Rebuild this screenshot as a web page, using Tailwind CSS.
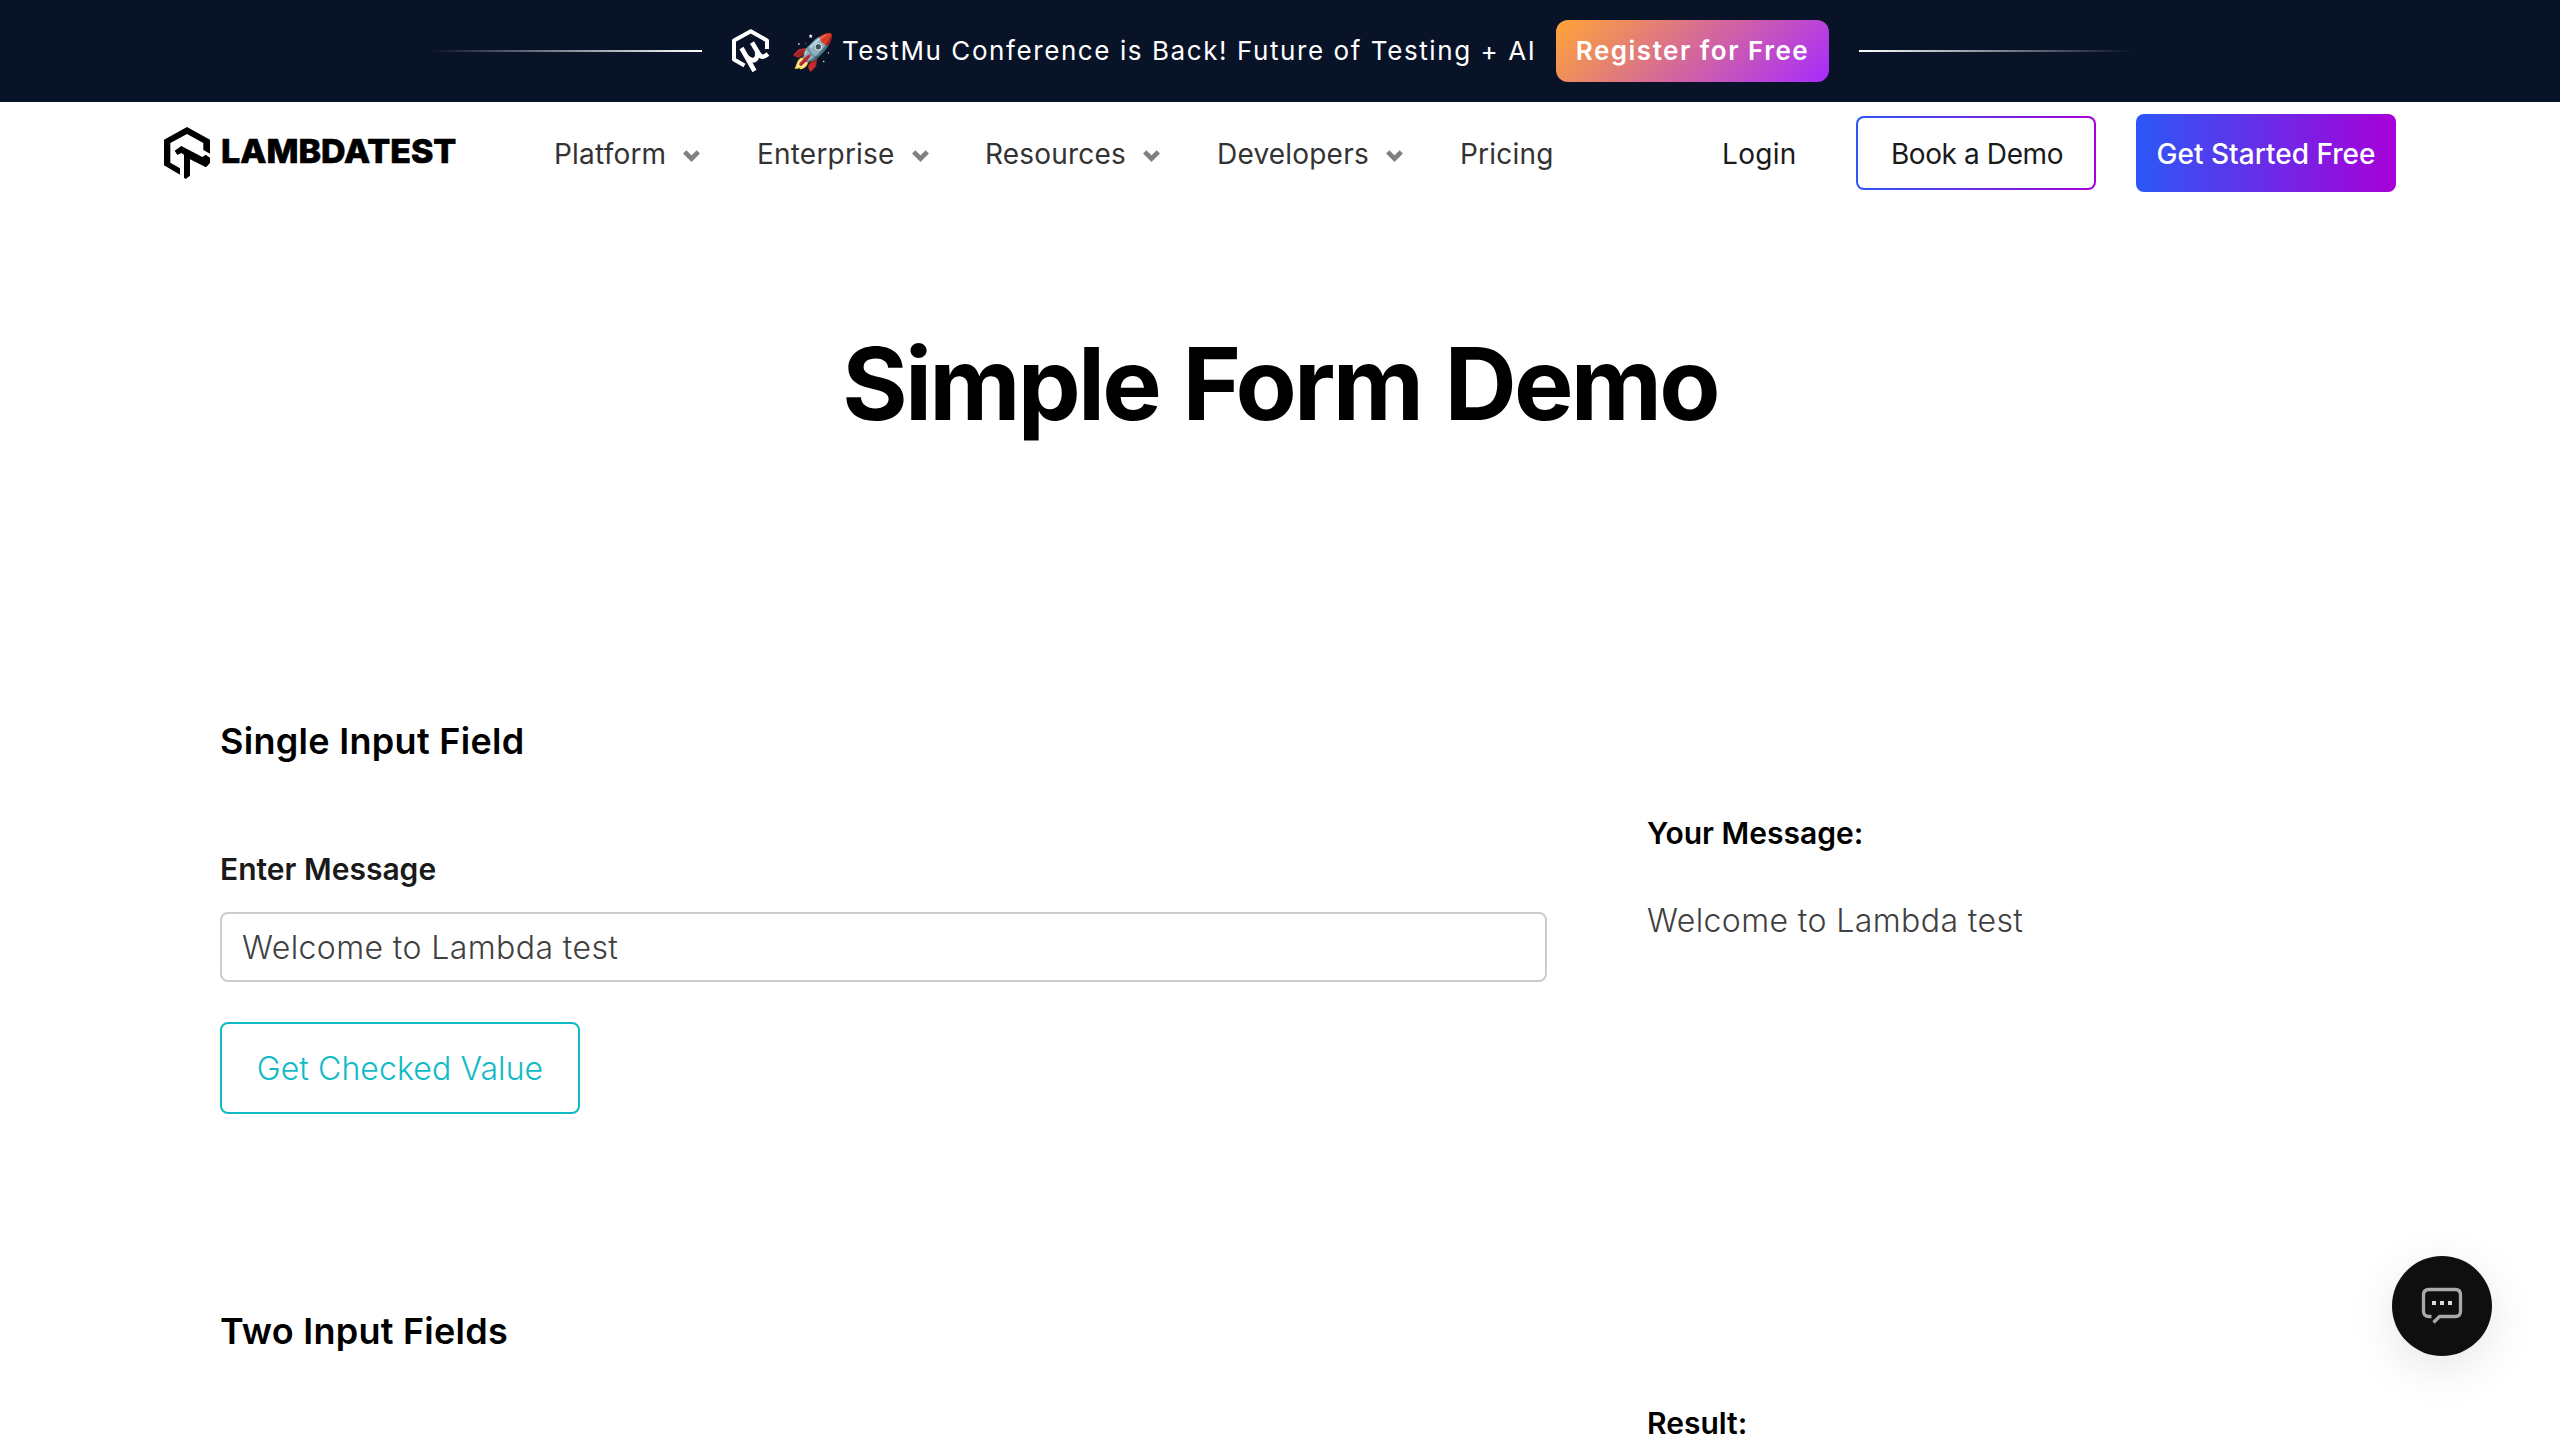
<!DOCTYPE html>
<html lang="en">
<head>
<meta charset="utf-8">
<title>Simple Form Demo</title>
<script src="https://cdn.jsdelivr.net/npm/@tailwindcss/browser@4"></script>
</head>
<body class="relative h-[1440px] w-[2560px] overflow-hidden bg-white font-['Inter',sans-serif] text-black">

<!-- Announcement banner -->
<div class="flex h-[102px] items-center bg-[#081327] pl-[428px] text-[26px] leading-[40px] whitespace-nowrap text-white">
  <div class="h-[2px] w-[274px] bg-linear-to-r/srgb from-white/0 to-white"></div>
  <svg class="ml-[28px] h-[48px] w-[42px]" viewBox="730 27 42 48" fill="none" stroke="#fff" stroke-width="4" stroke-linejoin="round">
    <path d="M744.500 65.500 734 59.500V40.500L750.800 31.200 767 40.500V49"/>
    <path d="M741.500 48 754.500 71M752 42.500 758.500 53.500C761.500 58.500 764 57 768 54M745 54.500C749 61 754.500 61.500 756.500 58C757.500 56 757.500 54 757 51" stroke-width="4.600"/>
  </svg>
  <span class="ml-[19px] text-[35px]">🚀</span>
  <span class="ml-[7px] w-[694px] tracking-[1.58px]">TestMu Conference is Back! Future of Testing + AI</span>
  <a class="ml-[20px] flex h-[62px] w-[273px] items-center justify-center rounded-[12px] bg-linear-[135deg,#ffa536,#a92bff] font-semibold tracking-[1.5px]">Register for Free</a>
  <div class="ml-[30px] h-[2px] w-[274px] bg-linear-to-l/srgb from-white/0 to-white"></div>
</div>

<!-- Main navigation -->
<header class="flex h-[102px] items-center pl-[163px] text-[28px] whitespace-nowrap">
  <svg class="h-[52px] w-[300px]" viewBox="69 80 900 156">
    <path d="M141 80 210 118V160L190 149V128L141 101 91 128V187L120 204V223L72 195V118Z"/>
    <path d="M104 151 124 137 187 170 197 163 210 172V188L198 201 150 177V226L137 236 132 232V163L124 158 112 164Z"/>
    <text x="243" y="189" font-size="100" font-weight="800" textLength="706" lengthAdjust="spacingAndGlyphs" stroke="#000" stroke-width="2">LAMBDATEST</text>
  </svg>
  <nav class="ml-[91px] flex items-center pt-[2px] tracking-[0.2px] text-[#333]">
    <a class="flex w-[203px] items-center">Platform<svg class="mt-[4px] ml-[17px] h-[12px] w-[17px]" viewBox="0 0 17 12" fill="none" stroke="#808080" stroke-width="4.600"><path d="M1.700 1.900 8.500 8.700 15.300 1.900"/></svg></a>
    <a class="flex w-[228px] items-center">Enterprise<svg class="mt-[4px] ml-[17px] h-[12px] w-[17px]" viewBox="0 0 17 12" fill="none" stroke="#808080" stroke-width="4.600"><path d="M1.700 1.900 8.500 8.700 15.300 1.900"/></svg></a>
    <a class="flex w-[232px] items-center">Resources<svg class="mt-[4px] ml-[17px] h-[12px] w-[17px]" viewBox="0 0 17 12" fill="none" stroke="#808080" stroke-width="4.600"><path d="M1.700 1.900 8.500 8.700 15.300 1.900"/></svg></a>
    <a class="flex w-[243px] items-center">Developers<svg class="mt-[4px] ml-[17px] h-[12px] w-[17px]" viewBox="0 0 17 12" fill="none" stroke="#808080" stroke-width="4.600"><path d="M1.700 1.900 8.500 8.700 15.300 1.900"/></svg></a>
    <a class="w-[262px]">Pricing</a>
  </nav>
  <a class="w-[134px] pt-[2px] tracking-[0.3px] text-[#1a1a1a]">Login</a>
  <a class="flex h-[74px] w-[240px] rounded-[8px] bg-linear-to-r/srgb from-[#2b58f7] to-[#a800d8] p-[2px] text-[#1a1a1a]"><span class="flex flex-1 items-center justify-center rounded-[6px] bg-white pt-[2px] pl-[2px] tracking-[-0.4px]">Book a Demo</span></a>
  <a class="ml-[40px] flex h-[78px] w-[260px] items-center justify-center rounded-[8px] bg-linear-to-r/srgb from-[#2b58f7] to-[#a800d8] pt-[1px] font-medium text-white">Get Started Free</a>
</header>

<main>
  <h1 class="pt-[120px] text-center text-[100px] leading-[120px] font-bold tracking-[-2.8px] [word-spacing:2.5px]">Simple Form Demo</h1>

  <section class="flex h-[590px] pt-[277px] pl-[220px]">
    <div class="w-[1327px]">
      <h2 class="text-[36px] leading-[40px] font-semibold tracking-[0.3px]">Single Input Field</h2>
      <label class="mt-[88px] block text-[30px] leading-[40px] font-semibold text-[#1a1a1a]">Enter Message</label>
      <div class="mt-[23px] flex h-[70px] items-center rounded-[8px] border-2 border-[#ccc] px-[20px] pt-[2px] text-[32px] font-light tracking-[0.4px] text-[#404040]">Welcome to Lambda test</div>
      <button class="mt-[40px] flex h-[92px] w-[360px] items-center justify-center rounded-[8px] border-2 border-[#10bac6] pt-[2px] text-[32px] font-light tracking-[0.1px] text-[#10bac6]">Get Checked Value</button>
    </div>
    <div class="ml-[100px] pt-[92px]">
      <p class="text-[30px] leading-[40px] font-semibold">Your Message:</p>
      <p class="mt-[48px] text-[32px] leading-[40px] font-light tracking-[0.4px] text-[#404040]">Welcome to Lambda test</p>
    </div>
  </section>

  <section class="flex h-[406px] pt-[277px] pl-[220px]">
    <h2 class="w-[1327px] text-[36px] leading-[40px] font-semibold tracking-[0.25px]">Two Input Fields</h2>
    <p class="ml-[100px] pt-[92px] text-[30px] leading-[40px] font-semibold">Result:</p>
  </section>
</main>

<!-- Floating chat launcher -->
<div class="absolute top-[1256px] left-[2392px] flex size-[100px] items-center justify-center rounded-full bg-[#0f0f0f] shadow-[0_12px_48px_rgba(0,0,0,0.1)]">
  <svg class="size-[44px]" viewBox="2420 1284 44 44" fill="none" stroke="#a9a9a9" stroke-width="3.300">
    <path d="M2431.500 1316.500H2429Q2423.500 1316.500 2423.500 1311V1295Q2423.500 1289.500 2429 1289.500H2455.500Q2460.500 1289.500 2460.500 1295V1311Q2460.500 1316.500 2455.500 1316.500H2439.500L2433.500 1322.500" stroke-linejoin="round"/>
    <path d="M2432 1303h4M2440 1303h4M2448 1303h4" stroke="#ddd" stroke-width="4"/>
  </svg>
</div>
</body>
</html>
